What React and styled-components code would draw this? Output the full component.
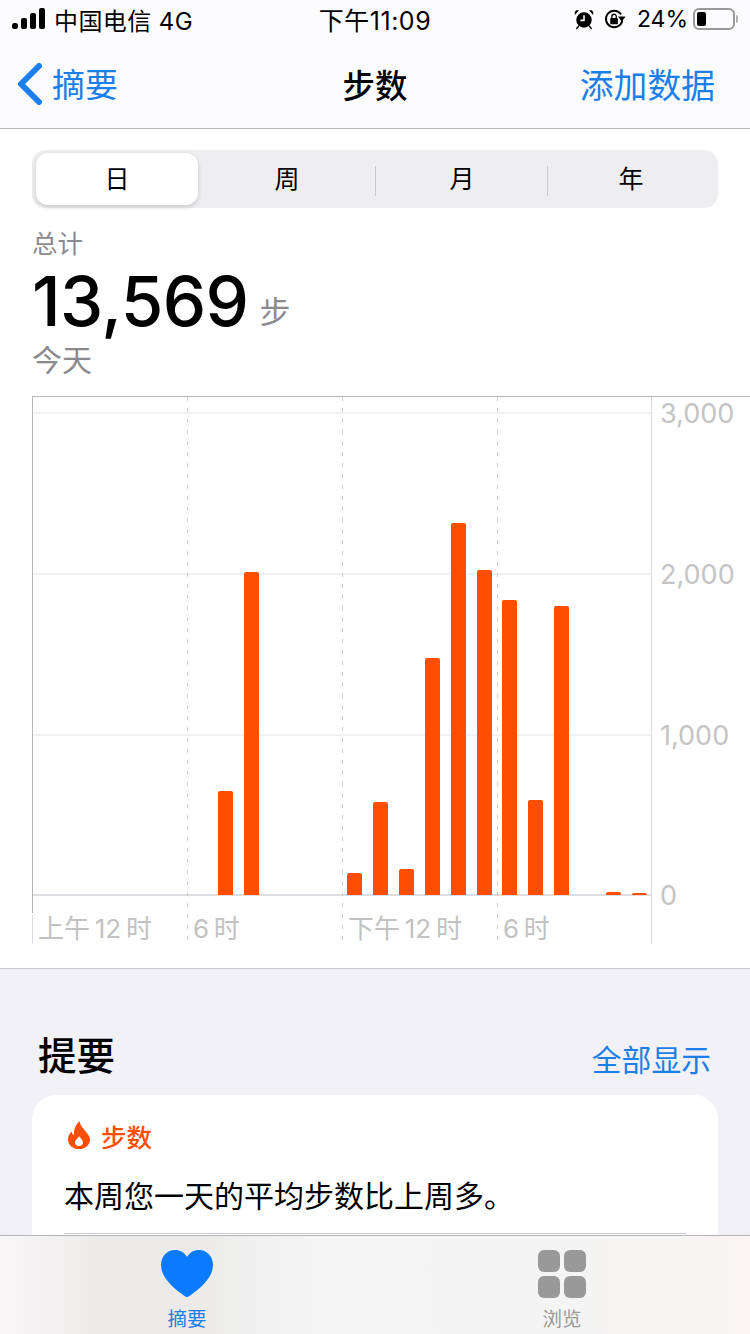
import React from 'react'
import styled, { createGlobalStyle } from 'styled-components'

const BLUE = '#1c7fe8'
const ORANGE = '#ff4e00'
const FONT = 'Inter, "Noto Sans CJK SC", sans-serif'

const GlobalStyle = createGlobalStyle`
  html, body { margin: 0; padding: 0; background: #fff; }
  * { box-sizing: border-box; }
`

const Page = styled.div`
  width: 750px;
  height: 1334px;
  overflow: hidden;
  display: flex;
  flex-direction: column;
  background: #f1f1f6;
  font-family: ${FONT};
  color: #000;
`

const Header = styled.header`
  background: #fcfcfe;
  border-bottom: 1px solid #b9b9bb;
  height: 129px;
  flex: none;
`

const StatusBar = styled.div`
  height: 38px;
  padding: 0 15px 0 12px;
  display: grid;
  grid-template-columns: minmax(0, 1fr) auto minmax(0, 1fr);
  align-items: center;
  font-size: 23px;
`

const StatusLeft = styled.div`
  display: flex;
  align-items: center;
  gap: 8px;
  font-size: 24px;
  letter-spacing: 0.4px;
  white-space: nowrap;
`

const StatusTime = styled.span`
  font-size: 25px;
  letter-spacing: 0.5px;
  margin-left: 3px;
`

const StatusRight = styled.div`
  display: flex;
  align-items: center;
  justify-content: flex-end;
  gap: 10px;
`

const Nav = styled.nav`
  height: 90px;
  padding: 0 18px;
  display: grid;
  grid-template-columns: minmax(0, 1fr) auto minmax(0, 1fr);
  align-items: center;
`

const Back = styled.div`
  display: flex;
  align-items: center;
  gap: 8px;
  font-size: 33px;
  color: ${BLUE};
`

const NavTitle = styled.div`
  font-size: 32.5px;
  font-weight: 500;
`

const NavAction = styled.div`
  font-size: 33.8px;
  color: ${BLUE};
  text-align: right;
  white-space: nowrap;
  padding-right: 17px;
`

const ChartSection = styled.section`
  height: 840px;
  flex: none;
  background: #fff;
  border-bottom: 1px solid #c9c9d0;
  padding-top: 21px;
`

const Segments = styled.div`
  width: 686px;
  height: 58px;
  margin-left: 32px;
  padding: 3px 4px;
  border-radius: 14px;
  background: #eeeef0;
  display: grid;
  grid-template-columns: 162px 178px 172px 1fr;
`

const Segment = styled.div`
  display: flex;
  align-items: center;
  justify-content: center;
  padding-bottom: 4px;
  font-size: 25px;
  border-radius: 12px;
  position: relative;
  background: ${p => (p.$active ? '#fff' : 'transparent')};
  box-shadow: ${p => (p.$active ? '0 2px 5px rgba(0,0,0,0.16)' : 'none')};

  &::after {
    content: ${p => (p.$divider ? '""' : 'none')};
    position: absolute;
    right: 0;
    top: 13px;
    height: 30px;
    width: 1px;
    background: #c8c8cc;
  }
`

const Summary = styled.div`
  margin: 19px 0 0 32px;
  height: 169px;
`

const SummaryLabel = styled.div`
  font-size: 25.5px;
  line-height: 33px;
  color: #8b8b8f;
`

const TotalRow = styled.div`
  display: flex;
  align-items: baseline;
  gap: 11px;
  margin-top: 7px;
  height: 68px;
  line-height: 68px;
`

const TotalValue = styled.span`
  font-size: 69px;
  font-weight: 500;
  letter-spacing: -0.6px;
`

const TotalUnit = styled.span`
  font-size: 31px;
  color: #8b8b8f;
  transform: translateY(-3px);
`

const Today = styled(SummaryLabel)`
  font-size: 30px;
  line-height: 44px;
  margin-top: 3px;
`

const Chart = styled.div`
  position: relative;
  margin-left: 32px;
  height: 548px;
  border-top: 1px solid #b5b5b5;
`

const TickOverlay = styled.div`
  position: absolute;
  top: 0;
  bottom: 0;
  left: 0;
  width: 620px;
  display: grid;
  grid-template-columns: repeat(4, 155px);
  border-right: 1px solid #dcdcdc;
`

const Tick = styled.div`
  background-image: ${p =>
    p.$solid
      ? 'linear-gradient(#b5b5b5 0 516px, transparent 516px 518px, #dcdcdc 518px)'
      : 'repeating-linear-gradient(#d0d0d0 0 4px, transparent 4px 11px)'};
  background-size: 1px 100%;
  background-repeat: no-repeat;
  padding: 518px 0 0 6px;
  font-size: 26px;
  line-height: 28px;
  color: #c2c2c2;
  white-space: nowrap;
`

const GridLine = styled.div`
  position: absolute;
  left: 0;
  width: 620px;
  height: 2px;
  background: ${p => (p.$base ? '#dedee2' : '#f1f1f3')};
`

const AxisLabel = styled.div`
  position: absolute;
  left: 628px;
  font-size: 27px;
  line-height: 30px;
  color: #c4c4c4;
  transform: translateY(-13px);
`

const Bars = styled.div`
  position: absolute;
  left: 0;
  top: 0;
  width: 620px;
  height: 498px;
  display: grid;
  grid-template-columns: repeat(24, 1fr);
  align-items: end;
  justify-items: center;
`

const Bar = styled.div`
  width: 15px;
  background: ${ORANGE};
  border-radius: 2px 2px 0 0;
`

const Highlights = styled.section`
  flex: 1;
  min-height: 0;
  overflow: hidden;
  padding: 62px 32px 0;
`

const HighlightsHead = styled.div`
  display: flex;
  justify-content: space-between;
  align-items: flex-start;
  padding: 0 7px 0 6px;
  height: 64px;
`

const HighlightsTitle = styled.h2`
  margin: 0;
  font-size: 38.5px;
  line-height: 50px;
  font-weight: 500;
`

const ShowAll = styled.div`
  font-size: 29.8px;
  line-height: 40px;
  color: ${BLUE};
  padding-top: 9px;
  box-sizing: content-box;
`

const Card = styled.article`
  height: 200px;
  background: #fff;
  border-radius: 24px 24px 0 0;
  padding: 24px 32px 0;
`

const CardHead = styled.div`
  display: flex;
  align-items: center;
  gap: 11px;
  padding-left: 4px;
  height: 32px;
  font-size: 25.5px;
  font-weight: 500;
  color: ${ORANGE};
`

const CardBody = styled.p`
  margin: 25px 0 0;
  font-size: 30px;
  line-height: 40px;
  height: 57px;
  box-sizing: content-box;
  border-bottom: 1px solid #c8c8cc;
`

const TabBar = styled.footer`
  height: 99px;
  flex: none;
  border-top: 1px solid #b4b4b6;
  background: linear-gradient(90deg, #f8f6f6 0, #ecebea 14%, #ecebea 26%, #f5f5f5 42%, #f4f4f4 70%, #f8f5f3 100%);
  display: grid;
  grid-template-columns: 374px 376px;
`

const Tab = styled.div`
  display: flex;
  flex-direction: column;
  align-items: center;
  padding-top: 14px;
  font-size: 19.5px;
  line-height: 26px;
  gap: 8px;
  color: ${p => (p.$active ? BLUE : '#9a9a9a')};
`

const BrowseIcon = styled.div`
  width: 48px;
  height: 48px;
  display: grid;
  grid-template-columns: 22px 22px;
  grid-template-rows: 22px 22px;
  gap: 4px;
`

const BrowseTile = styled.div`
  background: #999;
  border-radius: 6px;
`

const Battery = styled.div`
  width: 42px;
  height: 22px;
  margin-left: -5px;
  border: 2px solid #9a9a9a;
  border-radius: 6px;
  padding: 2px;
  position: relative;

  &::before {
    content: '';
    display: block;
    width: 9px;
    height: 14px;
    background: #000;
    border-radius: 2px;
  }

  &::after {
    content: '';
    position: absolute;
    right: -5px;
    top: 5px;
    width: 2px;
    height: 8px;
    background: #b0b0b0;
    border-radius: 0 2px 2px 0;
  }
`

const Signal = () => (
  <svg width="34" height="22" viewBox="0 0 34 22">
    <rect x="0" y="15" width="6" height="6" rx="2.5" />
    <rect x="9" y="10" width="6" height="11" rx="2" />
    <rect x="18" y="5" width="6" height="16" rx="2" />
    <rect x="27" y="0" width="6" height="21" rx="2" />
  </svg>
)

const Alarm = () => (
  <svg width="20" height="22" viewBox="0 0 22 22">
    <circle cx="11" cy="12" r="8.5" />
    <path d="M1 6.500 5.500 1.500 2.500 1.500 0.800 3.400ZM21 6.500 16.500 1.500 19.500 1.500 21.200 3.400Z" />
    <path d="M5 19 3 21.500M17 19 19 21.500" stroke="#000" strokeWidth="1.6" strokeLinecap="round" />
    <path d="M11 7v5.500H7" fill="none" stroke="#fff" strokeWidth="1.7" />
  </svg>
)

const RotationLock = () => (
  <svg width="23" height="22" viewBox="0 0 24 22">
    <path d="M19 13a8.600 8.600 0 1 1-1.600-7.400" fill="none" stroke="#000" strokeWidth="2" strokeLinecap="round" />
    <path d="M14.500 8.500h8l-4 5z" />
    <rect x="6.500" y="10" width="8" height="6.500" rx="1" />
    <path d="M8.200 10V8.300a2.300 2.300 0 0 1 4.600 0V10" fill="none" stroke="#000" strokeWidth="1.400" />
  </svg>
)

const BackChevron = () => (
  <svg width="26" height="44" viewBox="0 -1 26 44">
    <path d="M21 4 3 22l18 18" fill="none" stroke={BLUE} strokeWidth="6" strokeLinecap="round" strokeLinejoin="round" />
  </svg>
)

const Flame = () => (
  <svg width="22" height="28" viewBox="0 0 22 28">
    <path
      fill={ORANGE}
      fillRule="evenodd"
      d="M11.500 0c.8 4.600 3.200 6.600 5.600 9.800C19.500 12.800 22 15 22 18.400 22 24 17 28 11 28S0 24 0 18.400c0-3.200 1.600-5.800 3.600-7.800.3 1.700 1 3 2.400 3.800C5.700 9 7.500 3.600 11.500 0ZM11 25c2.400 0 4-1.500 4-3.600 0-2.400-2.500-3.600-3.900-6.400-1.200 2.600-4.100 3.800-4.100 6.400C7 23.500 8.600 25 11 25Z"
    />
  </svg>
)

const Heart = () => (
  <svg width="52" height="48" viewBox="0 0 52 48">
    <path
      fill="#0a7aff"
      d="M26 47c-1 0-2-.6-3.200-1.500C10.500 36.500 0 27 0 14.800 0 6.300 6.200 0 14 0c5.200 0 9.300 2.600 12 7 2.700-4.400 6.800-7 12-7 7.800 0 14 6.300 14 14.800C52 27 41.500 36.500 29.200 45.500 28 46.400 27 47 26 47Z"
    />
  </svg>
)

const PERIODS = ['日', '周', '月', '年']
const TICKS = ['上午\u200912\u2009时', '6\u2009时', '下午\u200912\u2009时', '6\u2009时']
const AXIS = [
  { label: '3,000', top: 15 },
  { label: '2,000', top: 176 },
  { label: '1,000', top: 337 },
  { label: '0', top: 497 }
]
const HOURS = { 7: 104, 8: 323, 12: 22, 13: 93, 14: 26, 15: 237, 16: 372, 17: 325, 18: 295, 19: 95, 20: 289, 22: 3, 23: 2 }

const App = () => {
  return (
    <Page>
      <GlobalStyle />
      <Header>
        <StatusBar>
          <StatusLeft>
            <Signal />
            <span>中国电信 4G</span>
          </StatusLeft>
          <StatusTime>下午11:09</StatusTime>
          <StatusRight>
            <Alarm />
            <RotationLock />
            <span>24%</span>
            <Battery />
          </StatusRight>
        </StatusBar>
        <Nav>
          <Back>
            <BackChevron />
            <span>摘要</span>
          </Back>
          <NavTitle>步数</NavTitle>
          <NavAction>添加数据</NavAction>
        </Nav>
      </Header>

      <ChartSection>
        <Segments>
          {PERIODS.map((p, i) => (
            <Segment key={p} $active={i === 0} $divider={i === 1 || i === 2}>{p}</Segment>
          ))}
        </Segments>
        <Summary>
          <SummaryLabel>总计</SummaryLabel>
          <TotalRow>
            <TotalValue>13,569</TotalValue>
            <TotalUnit>步</TotalUnit>
          </TotalRow>
          <Today>今天</Today>
        </Summary>
        <Chart>
          {AXIS.map((a, i) => (
            <GridLine key={a.label} $base={i === 3} style={{ top: a.top }} />
          ))}
          <TickOverlay>
            {TICKS.map((t, i) => (
              <Tick key={i} $solid={i === 0}>{t}</Tick>
            ))}
          </TickOverlay>
          <Bars>
            {Array.from({ length: 24 }, (_, i) => (
              <div key={i}>{HOURS[i] ? <Bar style={{ height: HOURS[i] }} /> : null}</div>
            ))}
          </Bars>
          {AXIS.map(a => (
            <AxisLabel key={a.label} style={{ top: a.top }}>{a.label}</AxisLabel>
          ))}
        </Chart>
      </ChartSection>

      <Highlights>
        <HighlightsHead>
          <HighlightsTitle>提要</HighlightsTitle>
          <ShowAll>全部显示</ShowAll>
        </HighlightsHead>
        <Card>
          <CardHead>
            <Flame />
            <span>步数</span>
          </CardHead>
          <CardBody>本周您一天的平均步数比上周多。</CardBody>
        </Card>
      </Highlights>

      <TabBar>
        <Tab $active>
          <Heart />
          <span>摘要</span>
        </Tab>
        <Tab>
          <BrowseIcon>
            <BrowseTile />
            <BrowseTile />
            <BrowseTile />
            <BrowseTile />
          </BrowseIcon>
          <span>浏览</span>
        </Tab>
      </TabBar>
    </Page>
  )
}

export default App
